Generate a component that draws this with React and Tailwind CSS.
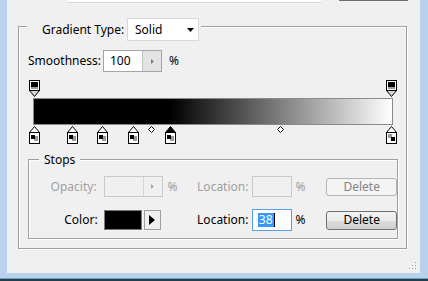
import React from "react";

const BAR_INNER = 357;
const posLeft = (pct, half) => 1 + (pct / 100) * BAR_INNER - half;

function TopStop() {
  return (
    <svg width="11" height="18" viewBox="0 0 11 18">
      <path d="M0.5 10.5 L5.5 16.5 L10.5 10.5 Z" fill="#d4d4d4" stroke="#000" />
      <rect x="0.5" y="0.5" width="10" height="10" fill="#fff" stroke="#000" />
      <rect x="2" y="2" width="7" height="5" fill="#000" />
      <rect x="2" y="7" width="7" height="2" fill="#9a9a9a" />
    </svg>
  );
}

function BottomStop({ selected, white }) {
  return (
    <svg width="11" height="18" viewBox="0 0 11 18">
      <path d="M5.5 0.5 L0.5 6.5 L10.5 6.5 Z" fill={selected ? "#000" : "#fff"} stroke="#000" />
      <rect x="0.5" y="6.5" width="10" height="11" fill="#fff" stroke="#000" />
      {white ? (
        <>
          <rect x="2" y="8" width="4" height="4" fill="#9a9a9a" />
          <rect x="5" y="11" width="4" height="4" fill="#000" />
        </>
      ) : (
        <>
          <rect x="5" y="10" width="4" height="5" fill="#9a9a9a" />
          <rect x="2" y="9" width="4" height="4" fill="#000" />
        </>
      )}
    </svg>
  );
}

function Diamond() {
  return (
    <svg width="7" height="7" viewBox="0 0 7 7">
      <path d="M3.5 0.5 L6.5 3.5 L3.5 6.5 L0.5 3.5 Z" fill="#fff" stroke="#000" />
    </svg>
  );
}

function SpinInput({ value, disabled }) {
  return (
    <div
      className={
        "flex h-full w-[59px] border " +
        (disabled ? "border-[#c9c9c9] bg-[#f0f0f0]" : "border-[#a5a5a5] bg-white")
      }
    >
      <div className="flex flex-1 items-center pl-[6px] leading-none">{value}</div>
      <div
        className={
          "flex w-[19px] items-center justify-center border-l " +
          (disabled ? "border-[#d6d6d6] bg-[#f0f0f0]" : "border-[#c4c4c4] bg-[#e3e3e3]")
        }
      >
        <svg width="3" height="5" viewBox="0 0 3 5">
          <path d="M0 0 L3 2.5 L0 5 Z" fill={disabled ? "#a8a8a8" : "#7a7a7a"} />
        </svg>
      </div>
    </div>
  );
}

export default function App() {
  const bottomStops = [
    { p: 0 },
    { p: 10.6 },
    { p: 19 },
    { p: 27.8 },
    { p: 38, selected: true },
    { p: 100, white: true },
  ];
  const diamonds = [33, 69];

  return (
    <div className="flex h-[281px] w-[428px] flex-col overflow-hidden bg-[#f0f0f0] font-['Noto_Sans',sans-serif] text-[12px] text-black">
      <div className="flex h-[273px]">
        <div className="w-[7px] bg-[#b9d1ea]" />
        <div className="relative flex-1">
          {/* top strip */}
          <div className="flex h-[3px]">
            <div className="ml-[61px] h-[3px] w-[253px] border-b border-[#d5d9de] bg-white" />
            <div className="ml-[18px] h-[1px] w-[69px] bg-[#6d6d6d]" />
          </div>

          {/* outer group */}
          <div className="ml-[11px] mt-[23px] flex h-[223px] w-[389px] flex-col border border-[#a0a0a0] shadow-[1px_1px_0_#fff,inset_1px_1px_0_#fff]">
            {/* legend */}
            <div className="-mt-[9px] ml-[8px] flex h-[23px] w-fit items-center bg-[#f0f0f0] pl-[15px] pr-[2px]">
              <span className="w-[85px] whitespace-nowrap leading-none">Gradient Type:</span>
              <div className="flex h-[23px] w-[72px] items-center justify-between border border-[#d9d9d9] bg-white pl-[7px] pr-[4px]">
                <span className="leading-none">Solid</span>
                <svg width="7" height="4" viewBox="0 0 7 4">
                  <path d="M0 0 L7 0 L3.5 4 Z" fill="#000" />
                </svg>
              </div>
            </div>

            {/* smoothness */}
            <div className="mt-[9px] flex h-[22px] items-center pl-[9px]">
              <span className="w-[75px] whitespace-nowrap leading-none">Smoothness:</span>
              <SpinInput value="100" />
              <span className="ml-[7px] leading-none">%</span>
            </div>

            {/* gradient editor */}
            <div className="ml-[14px] mt-[8px] flex w-[360px] flex-col">
              <div className="relative h-[18px]">
                {[0, 100].map((p) => (
                  <div key={p} className="absolute top-0" style={{ left: posLeft(p, 5) }}>
                    <TopStop />
                  </div>
                ))}
              </div>
              <div className="h-[27px] border border-[#8a8a8a] bg-[linear-gradient(to_right,#000_38%,#fff_100%)]" />
              <div className="relative h-[19px]">
                {bottomStops.map((s) => (
                  <div key={s.p} className="absolute top-[1px]" style={{ left: posLeft(s.p, 5) }}>
                    <BottomStop selected={s.selected} white={s.white} />
                  </div>
                ))}
                {diamonds.map((p) => (
                  <div key={p} className="absolute top-[1px]" style={{ left: posLeft(p, 3.5) }}>
                    <Diamond />
                  </div>
                ))}
              </div>
            </div>

            {/* stops group */}
            <div className="ml-[9px] mt-[15px] flex h-[80px] w-[370px] flex-col border border-[#a0a0a0] shadow-[1px_1px_0_#fff,inset_1px_1px_0_#fff]">
              <div className="-mt-[7px] ml-[10px] h-[14px] w-fit bg-[#f0f0f0] px-[5px] leading-[14px]">Stops</div>

              {/* opacity row */}
              <div className="mt-[9px] flex h-[21px] items-center text-[#a0a0a0]">
                <span className="w-[75px] pr-[7px] text-right leading-none">Opacity:</span>
                <div className="flex h-full w-[94px] items-center">
                  <SpinInput value="" disabled />
                  <span className="ml-[5px] leading-none">%</span>
                </div>
                <span className="w-[55px] leading-none">Location:</span>
                <div className="h-full w-[40px] border border-[#c9c9c9] bg-[#f0f0f0]" />
                <span className="w-[35px] pl-[4px] leading-none">%</span>
                <div className="flex h-[18px] w-[71px] items-center justify-center rounded-[3px] border border-[#b5b5b5] bg-[#f4f4f4] leading-none text-[#838383]">
                  Delete
                </div>
              </div>

              {/* color row */}
              <div className="mt-[12px] flex h-[22px] items-center">
                <span className="w-[75px] pr-[6px] text-right leading-none">Color:</span>
                <div className="flex h-[20px] w-[94px] items-center">
                  <div className="h-[20px] w-[38px] border border-[#7a7a7a] bg-black" />
                  <div className="ml-[2px] flex h-[20px] w-[17px] items-center justify-center border border-[#a0a0a0] bg-[#f0f0f0]">
                    <svg width="6" height="10" viewBox="0 0 6 10">
                      <path d="M0 0 L6 5 L0 10 Z" fill="#000" />
                    </svg>
                  </div>
                </div>
                <span className="w-[55px] leading-none">Location:</span>
                <div className="flex h-[22px] w-[40px] items-center border border-[#569de5] bg-white pl-[5px]">
                  <span className="bg-[#3399ff] px-[1px] leading-[14px] text-white">38</span>
                  <span className="h-[14px] w-[1px] bg-black" />
                </div>
                <span className="w-[35px] pl-[4px] leading-none">%</span>
                <div className="flex h-[19px] w-[71px] items-center justify-center rounded-[3px] border border-[#707070] bg-[linear-gradient(to_bottom,#f2f2f2,#ebebeb_50%,#dddddd_50%,#cfcfcf)] leading-none">
                  Delete
                </div>
              </div>
            </div>
          </div>

          {/* resize grip */}
          <div className="absolute bottom-[3px] right-[3px]">
            <svg width="8" height="8" viewBox="0 0 8 8">
              {[
                [6, 0],
                [3, 3],
                [6, 3],
                [0, 6],
                [3, 6],
                [6, 6],
              ].map(([x, y]) => (
                <g key={x + "-" + y}>
                  <rect x={x + 1} y={y + 1} width="1" height="1" fill="#fff" />
                  <rect x={x} y={y} width="1" height="1" fill="#a0a0a0" />
                </g>
              ))}
            </svg>
          </div>
        </div>
        <div className="w-[8px] bg-[#b9d1ea]" />
      </div>
      <div className="h-[5px] bg-[#b9d1ea]" />
      <div className="h-[1px] bg-[#5fa8c8]" />
      <div className="h-[2px] bg-[#263a47]" />
    </div>
  );
}
